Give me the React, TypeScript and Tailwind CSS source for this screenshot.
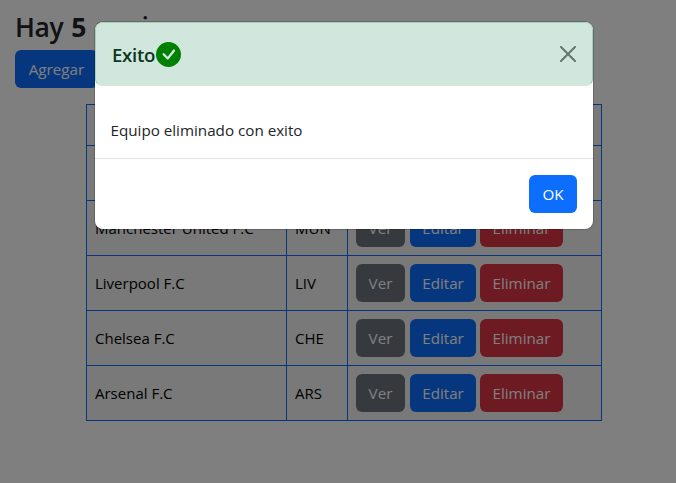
import type { ReactNode } from "react";

const teams = [
  { name: "Real Madrid C.F", code: "RMA" },
  { name: "Manchester United F.C", code: "MUN" },
  { name: "Liverpool F.C", code: "LIV" },
  { name: "Chelsea F.C", code: "CHE" },
  { name: "Arsenal F.C", code: "ARS" },
];

const cell = "border border-[#0d6efd] px-2 py-0 text-left font-normal";

function Button({ className, children }: { className: string; children: ReactNode }) {
  return (
    <button className={`h-[38px] shrink-0 rounded-md pt-px text-center text-[15.2px] text-white ${className}`}>
      {children}
    </button>
  );
}

function Modal() {
  return (
    <div
      role="dialog"
      className="absolute left-[95px] top-[22px] flex h-[207px] w-[498px] flex-col overflow-hidden rounded-lg bg-white shadow-[0_0_0_1px_rgba(0,0,0,0.175)]"
    >
      <header className="flex h-16 items-center rounded-[7px] border border-[#a3cfbb] border-b-[#d1e7dd] bg-[#d1e7dd] pl-4 pr-4">
        <h5 className="w-11 pt-px text-[18.6px] font-semibold tracking-[-0.3px] text-[#0a3622]">Exito</h5>
        <svg className="h-[25px] w-[25px] fill-[#008000]" viewBox="0 0 16 16">
          <path d="M16 8A8 8 0 1 1 0 8a8 8 0 0 1 16 0zm-3.97-3.03a.75.75 0 0 0-1.08.022L7.477 9.417 5.384 7.323a.75.75 0 0 0-1.06 1.06L6.97 11.03a.75.75 0 0 0 1.079-.02l3.992-4.99a.75.75 0 0 0-.01-1.05z" />
        </svg>
        <button className="ml-auto opacity-50" aria-label="Close">
          <svg className="h-4 w-4 fill-black" viewBox="0 0 16 16">
            <path d="M.293.293a1 1 0 0 1 1.414 0L8 6.586 14.293.293a1 1 0 1 1 1.414 1.414L9.414 8l6.293 6.293a1 1 0 0 1-1.414 1.414L8 9.414l-6.293 6.293a1 1 0 0 1-1.414-1.414L6.586 8 .293 1.707a1 1 0 0 1 0-1.414z" />
          </svg>
        </button>
      </header>
      <div className="flex h-[72px] items-end pb-4 pl-[15.5px] pr-4 text-[15.2px] text-[#212529]">
        <p className="leading-6">Equipo eliminado con exito</p>
      </div>
      <footer className="flex flex-1 items-start justify-end border-t border-[#dee2e6] px-4 pt-4">
        <Button className="w-12 bg-[#0d6efd]">OK</Button>
      </footer>
    </div>
  );
}

export default function App() {
  return (
    <div className="relative h-[483px] w-[676px] overflow-hidden bg-white font-['Open_Sans','Noto_Sans',sans-serif] text-[15px] text-[#212529]">
      <main className="px-[15px] pt-[10px]">
        <h1 className="mb-[6px] h-[34px] text-[26.5px] font-semibold leading-[34px] tracking-[-0.4px] [word-spacing:1.5px]">
          Hay <b className="font-bold">5</b> equipos
        </h1>
        <Button className="block w-[83px] bg-[#0d6efd]">Agregar</Button>
        <table className="ml-[71px] mt-4 w-[516px] table-fixed border-collapse bg-[#f2f2f2] text-black">
          <colgroup>
            <col className="w-[200px]" />
            <col className="w-[61px]" />
            <col />
          </colgroup>
          <thead>
            <tr className="h-[41px]">
              <th className={cell}>Nombre</th>
              <th className={cell}>TLA</th>
              <th className={cell}>Acciones</th>
            </tr>
          </thead>
          <tbody>
            {teams.map((team) => (
              <tr key={team.code} className="h-[55px]">
                <td className={cell}>{team.name}</td>
                <td className={cell}>{team.code}</td>
                <td className={cell}>
                  <div className="flex">
                    <Button className="mr-[5px] w-[49px] bg-[#6c757d]">Ver</Button>
                    <Button className="mr-1 w-[66px] bg-[#0d6efd]">Editar</Button>
                    <Button className="w-[83px] bg-[#dc3545]">Eliminar</Button>
                  </div>
                </td>
              </tr>
            ))}
          </tbody>
        </table>
      </main>
      <div className="absolute inset-0 bg-black/50" />
      <Modal />
    </div>
  );
}
